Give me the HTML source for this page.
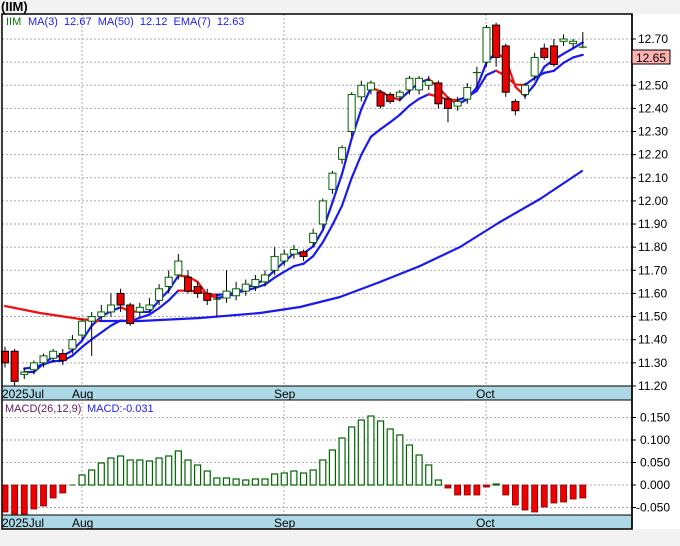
<!DOCTYPE html>
<html><head><meta charset="utf-8"><style>
html,body{margin:0;padding:0;background:#f2f2f2;}
body{width:680px;height:546px;overflow:hidden;position:relative;font-family:"Liberation Sans",sans-serif;}
svg{position:absolute;left:0;top:0}
</style></head><body>
<svg id="s" width="680" height="546" xmlns="http://www.w3.org/2000/svg" font-family="Liberation Sans, sans-serif">
<rect x="0" y="0" width="680" height="546" fill="#f2f2f2"/>
<rect x="2" y="14" width="678" height="515" fill="#ffffff"/>
<text x="1" y="11" font-size="13" font-weight="bold" fill="#000">(IIM)</text>
<g id="grid"></g>
<g id="lines"></g>
<g id="cand"></g>
<g id="macd"></g>
<!-- axis bands -->
<rect x="2" y="386" width="630" height="14" fill="#add8e6" stroke="#000" stroke-width="1"/>
<rect x="2" y="515" width="630" height="14" fill="#add8e6" stroke="#000" stroke-width="1"/>
<g font-size="12" fill="#000">
<text x="2" y="398">2025Jul</text><text x="72" y="398">Aug</text><text x="274" y="398">Sep</text><text x="476" y="398">Oct</text>
<text x="2" y="527">2025Jul</text><text x="72" y="527">Aug</text><text x="274" y="527">Sep</text><text x="476" y="527">Oct</text>
</g>
<rect x="2" y="14" width="630" height="515" fill="none" stroke="#000" stroke-width="1.5"/>
<line x1="632" y1="14" x2="632" y2="529" stroke="#000" stroke-width="1.5"/>
<g id="axis" font-size="12" fill="#000"></g>
<text x="6" y="25" font-size="11" fill="#0a7a0a">IIM</text>
<text x="28" y="25" font-size="11" fill="#2222ee" xml:space="preserve">MA(3)  12.67  MA(50)  12.12  EMA(7)  12.63</text>
<text x="5" y="412" font-size="11" fill="#602060">MACD(26,12,9)</text>
<text x="87" y="412" font-size="11" fill="#2222ee">MACD:-0.031</text>
<rect x="632" y="50" width="38" height="14" fill="#ffb0b0" stroke="#000" stroke-width="1"/>
<text x="636" y="62" font-size="12" fill="#000">12.65</text>
</svg>
<script>
var NS="http://www.w3.org/2000/svg";
function el(p,t,a){var e=document.createElementNS(NS,t);for(var k in a)e.setAttribute(k,a[k]);p.appendChild(e);return e;}
var Y=function(p){return 39+(12.70-p)*231.3;};
var X=function(i){return 5+9.63*i;};
var g=document.getElementById('grid'),ax=document.getElementById('axis');
for(var v=11.2;v<=12.71;v+=0.1){var y=Y(v);el(g,'line',{x1:2,x2:632,y1:y,y2:y,stroke:'#aaa','stroke-dasharray':'2,2','stroke-width':1});
el(ax,'line',{x1:632,x2:636,y1:y,y2:y,stroke:'#000'});
if(Math.abs(v-12.6)>0.01){var t=el(ax,'text',{x:638,y:y+4});t.textContent=v.toFixed(2);}}
var mz=485,mk=22.5/0.05;
[-0.05,0,0.05,0.1,0.15].forEach(function(v){var y=mz-v*mk;el(g,'line',{x1:2,x2:632,y1:y,y2:y,stroke:'#aaa','stroke-dasharray':'2,2'});el(ax,'line',{x1:632,x2:636,y1:y,y2:y,stroke:'#000'});var t=el(ax,'text',{x:v<0?636:640,y:y+4});t.textContent=v.toFixed(3);});
[82,284,486].forEach(function(x){el(g,'line',{x1:x,x2:x,y1:14,y2:529,stroke:'#aaa','stroke-dasharray':'2,2'});});
var d=[[11.35,11.30,11.37,11.28],[11.35,11.22,11.36,11.20],[11.25,11.26,11.28,11.23],[11.27,11.30,11.31,11.25],[11.30,11.33,11.34,11.28],[11.32,11.35,11.36,11.30],[11.34,11.31,11.36,11.29],[11.36,11.40,11.42,11.34],[11.42,11.48,11.49,11.40],[11.48,11.50,11.52,11.33],[11.50,11.52,11.55,11.48],[11.52,11.55,11.60,11.50],[11.60,11.55,11.62,11.52],[11.55,11.47,11.56,11.46],[11.52,11.54,11.56,11.50],[11.53,11.55,11.58,11.52],[11.57,11.62,11.64,11.55],[11.63,11.67,11.70,11.60],[11.68,11.74,11.77,11.66],[11.67,11.61,11.70,11.60],[11.63,11.60,11.65,11.58],[11.60,11.57,11.62,11.55],[11.57,11.575,11.60,11.50],[11.58,11.61,11.70,11.56],[11.59,11.62,11.65,11.57],[11.61,11.64,11.66,11.59],[11.63,11.66,11.68,11.61],[11.65,11.68,11.70,11.63],[11.70,11.76,11.80,11.68],[11.74,11.77,11.79,11.72],[11.77,11.79,11.81,11.75],[11.78,11.76,11.79,11.74],[11.82,11.86,11.88,11.80],[11.90,12.00,12.01,11.88],[12.05,12.12,12.13,12.03],[12.18,12.23,12.24,12.16],[12.30,12.46,12.47,12.28],[12.45,12.50,12.52,12.43],[12.48,12.51,12.52,12.46],[12.47,12.41,12.48,12.40],[12.46,12.43,12.47,12.42],[12.45,12.47,12.48,12.43],[12.48,12.53,12.54,12.46],[12.48,12.53,12.54,12.46],[12.50,12.52,12.54,12.48],[12.51,12.42,12.52,12.40],[12.44,12.40,12.45,12.34],[12.41,12.43,12.45,12.39],[12.44,12.49,12.51,12.42],[12.55,12.555,12.58,12.49],[12.60,12.75,12.76,12.58],[12.76,12.62,12.77,12.58],[12.67,12.47,12.68,12.45],[12.43,12.39,12.44,12.37],[12.46,12.50,12.51,12.44],[12.54,12.62,12.64,12.52],[12.66,12.62,12.68,12.61],[12.67,12.59,12.70,12.58],[12.69,12.70,12.72,12.67],[12.68,12.69,12.70,12.66],[12.66,12.665,12.73,12.66]];
var c=document.getElementById('cand');
d.forEach(function(r,i){var x=X(i),up=r[1]>=r[0],col=up?'#006400':'#000';
el(c,'line',{x1:x,x2:x,y1:Y(r[2]),y2:Y(r[3]),stroke:'#000','stroke-width':1});
var t=Y(Math.max(r[0],r[1])),b=Y(Math.min(r[0],r[1]));
if(b-t<1.5){el(c,'line',{x1:x-4,x2:x+4,y1:t,y2:t,stroke:up?'#006400':'#000','stroke-width':1.2});}
else el(c,'rect',{x:x-3.5,y:t,width:7,height:b-t,fill:up?'#fff':'#ee0000',stroke:up?'#006400':'#000','stroke-width':1});});
var L=document.getElementById('lines');
function seg(pts){for(var i=1;i<pts.length;i++){var dn=pts[i][1]>pts[i-1][1]+0.05;el(L,'line',{x1:pts[i-1][0],y1:pts[i-1][1],x2:pts[i][0],y2:pts[i][1],stroke:dn?'#ee1111':'#1a1aee','stroke-width':2.2,'stroke-linecap':'round'});}}
var cl=d.map(function(r){return r[1];});
var m3=[];for(var i=2;i<cl.length;i++)m3.push([X(i),Y((cl[i]+cl[i-1]+cl[i-2])/3)]);
var e=cl[0],e7=[];cl.forEach(function(v,i){e=i?e+(v-e)*0.25:v;if(i>1)e7.push([X(i),Y(e)]);});
seg(m3);seg(e7);
seg([[5,306],[40,313],[80,319],[100,321],[140,321],[200,318],[260,313],[300,307],[340,297],[380,282],[420,266],[460,247],[500,222],[540,199],[582,171]]);
var mh=[-27,-29,-29,-24,-21,-13,-8,0,10,15,22,27,29,25,25,24,27,29,34,25,20,14,7,7,6,5,6,6,11,12,14,12,15,25,35,47,58,65,69,64,56,50,40,30,20,5,-3,-10,-10,-10,-2,1,-10,-20,-25,-27,-22,-18,-17,-14,-13];
var M=document.getElementById('macd');
mh.forEach(function(h,i){var x=X(i);if(h==0){el(M,'line',{x1:x-3,x2:x+3,y1:mz,y2:mz,stroke:'#006400'});return;}
if(h>0)el(M,'rect',{x:x-3,y:mz-h,width:6,height:h,fill:'#fff',stroke:'#006400','stroke-width':1.2});
else el(M,'rect',{x:x-3,y:mz,width:6,height:-h,fill:'#ee0000',stroke:'#800','stroke-width':0.8});});
</script>
</body></html>
